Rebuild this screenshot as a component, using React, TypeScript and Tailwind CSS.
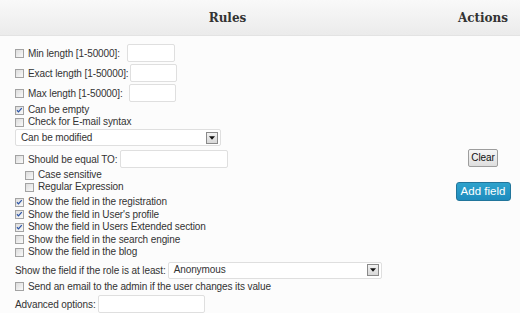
import React from "react";

function Cb({ checked = false }: { checked?: boolean }) {
  return (
    <span className="relative inline-block w-[9px] h-[9px] shrink-0 border border-[#a3a3a3] bg-gradient-to-br from-[#dcdcdc] to-[#fafafa]">
      {checked && (
        <svg viewBox="0 0 9 9" className="absolute left-0 top-0 w-[7px] h-[7px]">
          <path d="M1.2 4.2 L3.2 6.2 L7.4 1.4" fill="none" stroke="#2c55a8" strokeWidth="1.6" />
        </svg>
      )}
    </span>
  );
}

function CbRow({ label, checked = false, h = "h-[12px]" }: { label: string; checked?: boolean; h?: string }) {
  return (
    <div className={`flex items-center gap-[4px] ${h}`}>
      <Cb checked={checked} />
      <span className="leading-none whitespace-nowrap">{label}</span>
    </div>
  );
}

function Input({ w }: { w: string }) {
  return <div className={`${w} h-[18px] bg-white border border-[#dfdfdf] rounded-[2px]`} />;
}

function Select({ w, label }: { w: string; label: string }) {
  return (
    <div className={`${w} h-[17px] bg-white border border-[#dfdfdf] rounded-[2px] flex items-center justify-between pl-[5px] pr-[2px]`}>
      <span className="leading-none">{label}</span>
      <span className="w-[12px] h-[12px] border border-[#8a8a8a] bg-gradient-to-b from-[#f2f2f2] to-[#d8d8d8] flex items-center justify-center">
        <svg viewBox="0 0 7 4" className="w-[6px] h-[4px]">
          <path d="M0 0 H7 L3.5 4 Z" fill="#111" />
        </svg>
      </span>
    </div>
  );
}

export default function App() {
  return (
    <div className="w-[520px] h-[313px] overflow-hidden bg-[#fcfcfc] text-[10px] tracking-[-0.1px] text-[#333] font-['Liberation_Sans',Arial,sans-serif]">
      <div className="h-[36px] flex items-center border-b border-[#e3e3e3] bg-gradient-to-b from-[#f9f9f9] to-[#ebebeb] font-['DejaVu_Serif',Georgia,serif] font-bold text-[12px] tracking-normal text-[#333]">
        <div className="w-[446px] pl-[9px] text-center">Rules</div>
        <div className="flex-1 text-center">Actions</div>
      </div>
      <div className="flex">
        <div className="w-[446px] pl-[15px] pt-[7px]">
          <div className="flex items-center h-[20px]">
            <Cb />
            <span className="ml-[4px] whitespace-nowrap">Min length [1-50000]:</span>
            <div className="ml-[7px]"><Input w="w-[48px]" /></div>
          </div>
          <div className="flex items-center h-[20px]">
            <Cb />
            <span className="ml-[4px] whitespace-nowrap">Exact length [1-50000]:</span>
            <div className="ml-[1px]"><Input w="w-[47px]" /></div>
          </div>
          <div className="flex items-center h-[20px]">
            <Cb />
            <span className="ml-[4px] whitespace-nowrap">Max length [1-50000]:</span>
            <div className="ml-[6px]"><Input w="w-[47px]" /></div>
          </div>
          <div className="pt-[1px]">
            <CbRow label="Can be empty" checked />
            <CbRow label="Check for E-mail syntax" />
          </div>
          <div className="mt-[1px]">
            <Select w="w-[206px]" label="Can be modified" />
          </div>
          <div className="flex items-center h-[20px] mt-[3px]">
            <Cb />
            <span className="ml-[4px] whitespace-nowrap">Should be equal TO:</span>
            <div className="ml-[3px]"><Input w="w-[108px]" /></div>
          </div>
          <div className="pl-[10px]">
            <CbRow label="Case sensitive" />
            <CbRow label="Regular Expression" />
          </div>
          <div className="mt-[3px]">
            <CbRow label="Show the field in the registration" checked h="h-[12.5px]" />
            <CbRow label="Show the field in User's profile" checked h="h-[12.5px]" />
            <CbRow label="Show the field in Users Extended section" checked h="h-[12.5px]" />
            <CbRow label="Show the field in the search engine" h="h-[12.5px]" />
            <CbRow label="Show the field in the blog" h="h-[12.5px]" />
          </div>
          <div className="flex items-center mt-[2px] h-[19px]">
            <span className="whitespace-nowrap">Show the field if the role is at least:</span>
            <div className="ml-[2px]"><Select w="w-[214px]" label="Anonymous" /></div>
          </div>
          <div className="mt-[1px]">
            <CbRow label="Send an email to the admin if the user changes its value" />
          </div>
          <div className="flex items-center mt-[2px] h-[19px]">
            <span className="whitespace-nowrap">Advanced options:</span>
            <div className="ml-[2px]"><Input w="w-[107px]" /></div>
          </div>
        </div>
        <div className="flex-1 flex flex-col items-center pt-[113px]">
          <button className="h-[18px] px-[2px] border border-[#9d9d9d] rounded-[2px] bg-gradient-to-b from-[#f6f6f6] to-[#dedede] text-[10px] text-[#111] leading-none">
            Clear
          </button>
          <button className="mt-[15px] h-[19px] w-[55px] rounded-[3px] border border-[#21759b] bg-gradient-to-b from-[#2ea2cc] to-[#1e8cbe] text-white text-[11.5px] tracking-normal leading-none">
            Add field
          </button>
        </div>
      </div>
    </div>
  );
}
